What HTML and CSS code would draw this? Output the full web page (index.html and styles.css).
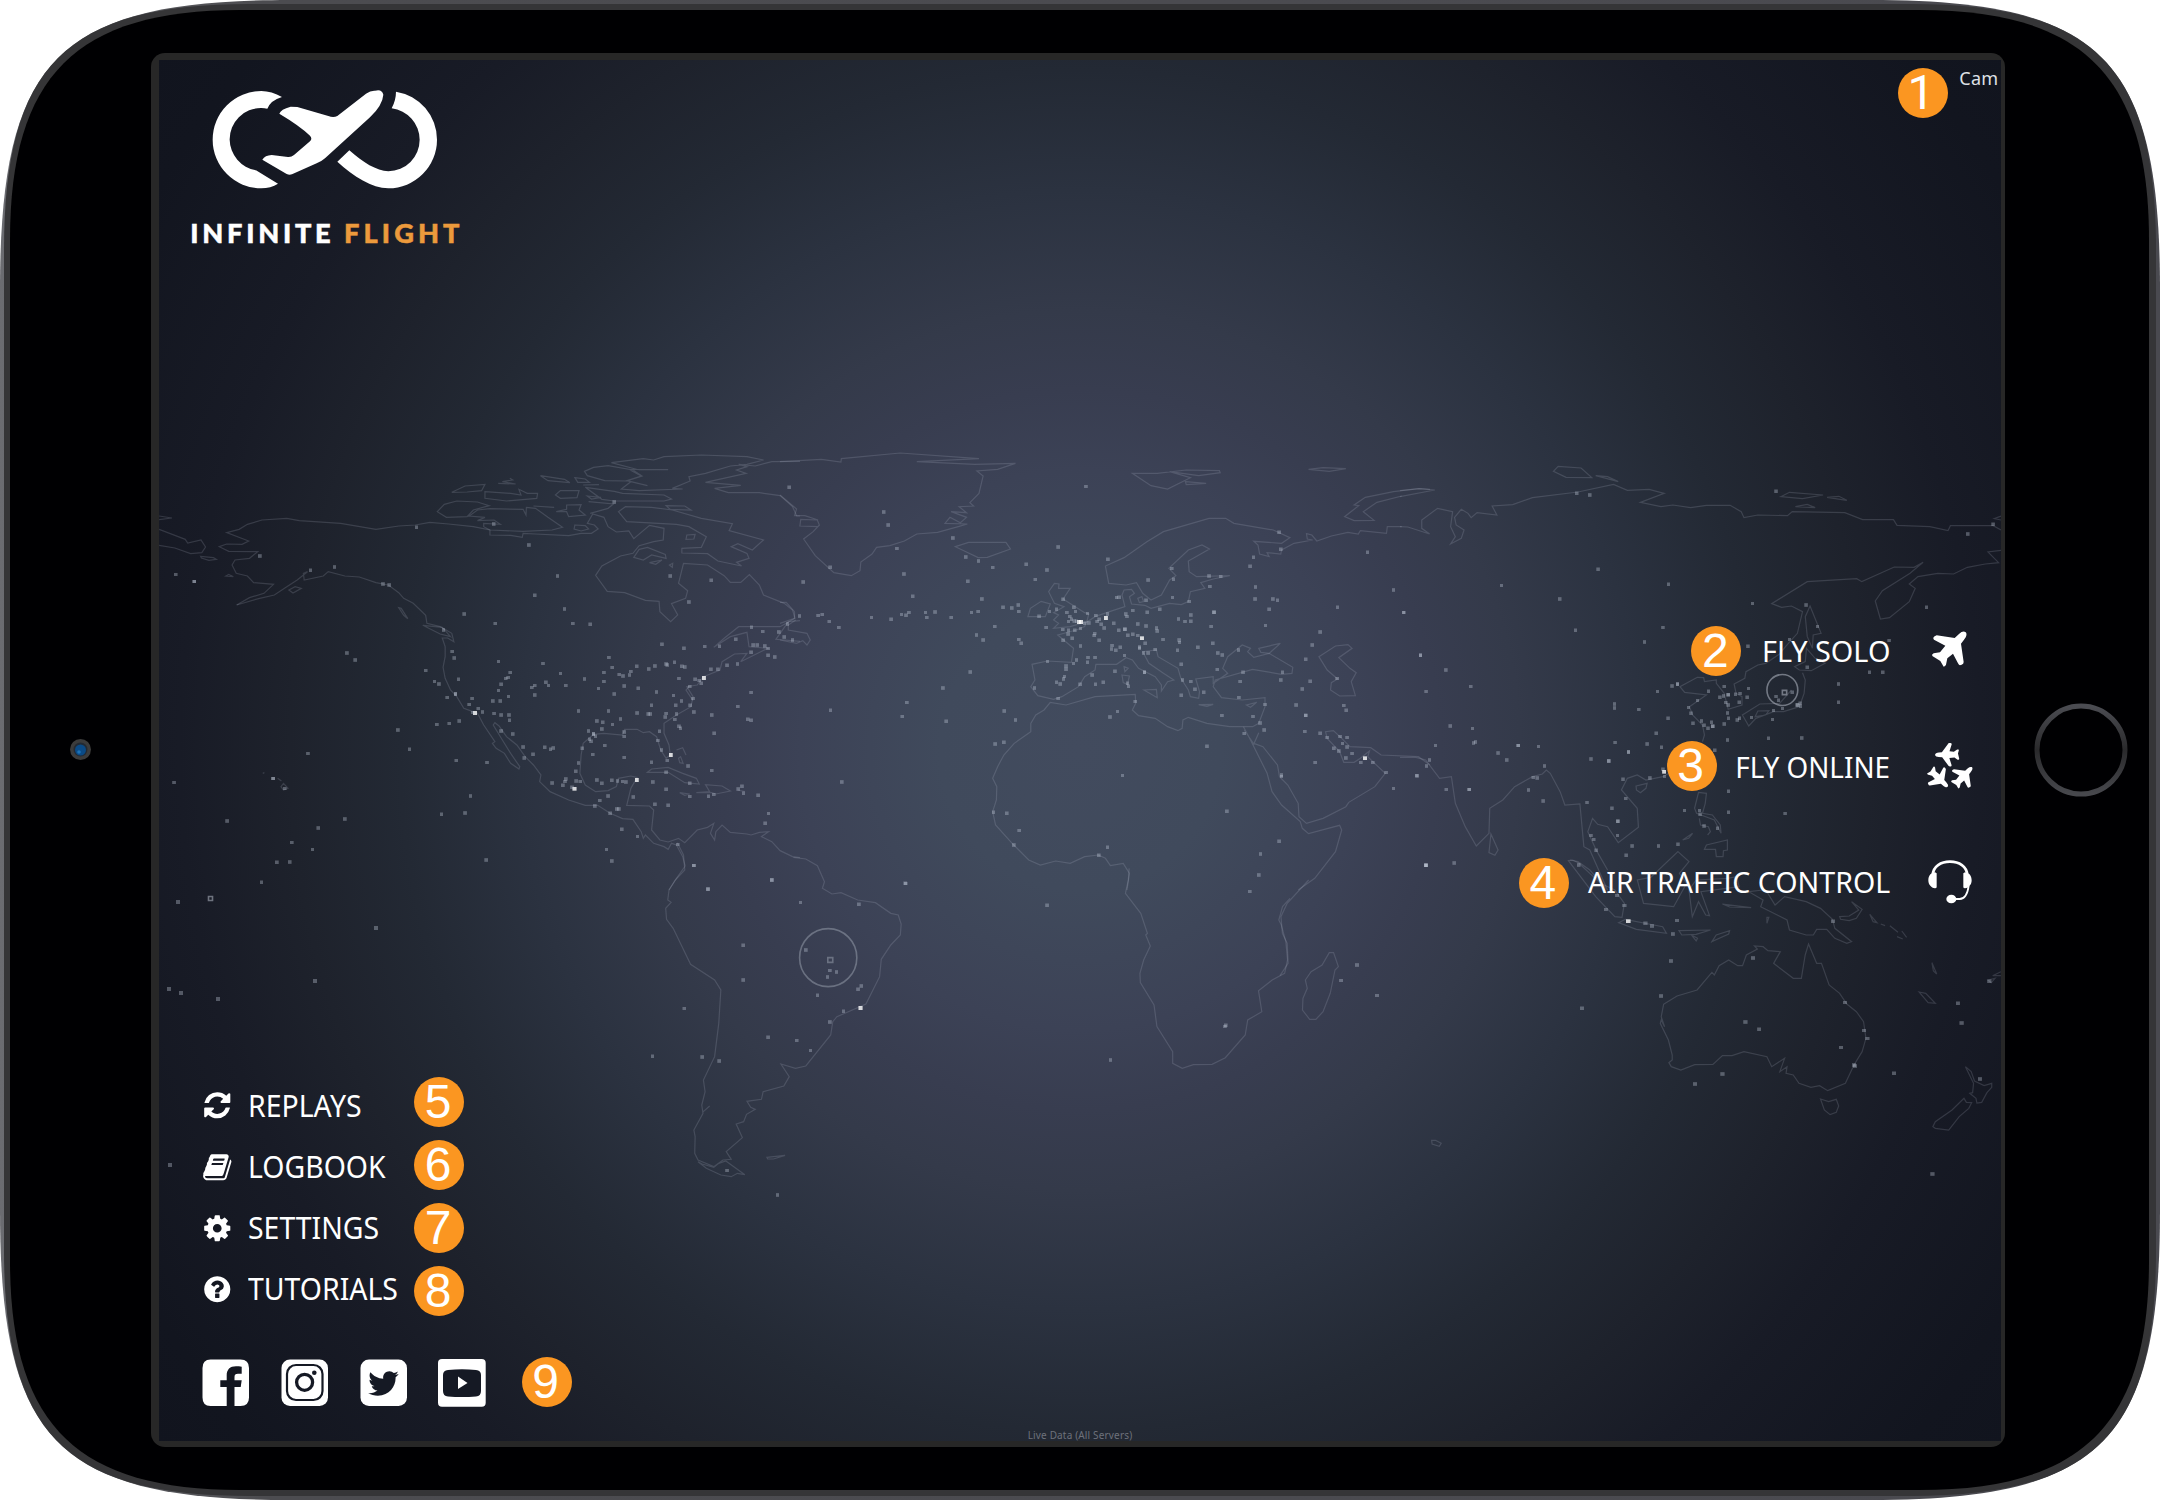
FILE: index.html
```
<!DOCTYPE html>
<html lang="en">
<head>
<meta charset="utf-8">
<title>Infinite Flight</title>
<link rel="stylesheet" href="styles.css">
</head>
<body>
<div class="device">
  <svg class="shell" viewBox="0 0 2160 1500">
    <defs>
      <linearGradient id="rim" x1="0" x2="1" y1="0" y2="0">
        <stop offset="0" stop-color="#6b6c71"/><stop offset=".12" stop-color="#4c4c50"/><stop offset="1" stop-color="#4a4a50"/>
      </linearGradient>
      <linearGradient id="ring" x1="0" x2="0" y1="0" y2="1">
        <stop offset="0" stop-color="#4b4c52"/><stop offset=".5" stop-color="#2a2a2c"/><stop offset="1" stop-color="#47484d"/>
      </linearGradient>
    </defs>
    <path fill="url(#rim)" d="M0 290C0 58 58 0 290 0H1870C2102 0 2160 58 2160 290V1210C2160 1442 2102 1500 1870 1500H290C58 1500 0 1442 0 1210Z"/>
    <path fill="#353537" d="M4 250C4 66 66 4 250 4H1910C2094 4 2156 66 2156 250V1250C2156 1434 2094 1496 1910 1496H250C66 1496 4 1434 4 1250Z"/>
    <path fill="#000002" d="M10 240C10 76 76 10 240 10H1919C2083 10 2149 76 2149 240V1260C2149 1424 2083 1490 1919 1490H240C76 1490 10 1424 10 1260Z"/>
    <circle cx="80.500" cy="749.500" r="10.500" fill="#3c3c3c"/>
    <circle cx="80.500" cy="749.500" r="7" fill="#232a33"/>
    <circle cx="80.500" cy="750" r="5.500" fill="#0a4a86"/>
    <circle cx="79" cy="752" r="1.800" fill="#1b72b8"/>
    <circle cx="2081" cy="750" r="44" fill="none" stroke="url(#ring)" stroke-width="5"/>
  </svg>

  <div class="bezel"><main class="screen">
    <svg class="map" viewBox="159 60 1842 1381">
      <defs>
        <marker id="dim" markerUnits="userSpaceOnUse" markerWidth="9" markerHeight="11" refX="4.500" refY="5.500"><rect width="9" height="11" fill="#c9d2e2" fill-opacity=".34"/></marker>
        <marker id="lit" markerUnits="userSpaceOnUse" markerWidth="10" markerHeight="12" refX="5" refY="6"><rect width="10" height="12" fill="#fff" fill-opacity=".8"/></marker>
        <marker id="pt" markerUnits="userSpaceOnUse" markerWidth="4" markerHeight="4" refX="2" refY="2"><rect width="4" height="4" fill="#c9d2e2" fill-opacity=".34"/></marker>
      </defs>

      <!-- North America and the eastern Pacific -->
      <g transform="translate(150 430) scale(.41454 .33333)">
        <path class="coast" d="M22 298L60 316 85 328 91 339 123 330 134 351 125 368 98 371 60 354 22 346M122 379L153 383 160 388 142 391 124 384ZM22 258L53 264 22 269"/>
        <path class="coast" d="M209 525L262 506 300 495 330 470 355 450 380 425 370 430 372 450 418 438 430 425 470 438 505 441 545 458 575 465 600 488 612 505 635 520 665 556 668 580 700 590 728 610 733 635 718 624 705 624 712 650 712 680 707 712 712 745 725 780 740 800 757 835 790 850 805 885 832 935 826 940 835 955 855 970 870 1000 890 1017 892 1010 870 970 850 930 828 885 832 878 842 888 860 920 885 945 905 980 925 1005 943 1035 940 1055 965 1085 1010 1110 1050 1126 1080 1126 1110 1150 1140 1166 1165 1168 1185 1205 1190 1225 1195 1215 1215 1240 1240 1250 1250 1258 1258 1240 1270 1245 1285 1280 1291 1308 1270 1345 1252 1380"/>
        <path class="coast" d="M209 525L240 503 275 490 298 463 250 458 235 438 208 430 198 405 205 390 240 385 260 365 190 364 167 350 185 342 222 343 238 333 185 308 215 298 235 283 270 270 330 265 360 272 460 280 545 298 600 288 640 285 675 277 720 282 780 290 820 300 820 315 870 316 898 322 900 310 930 312 1010 317 1040 310 1065 310 1081 297 1072 285 1055 280 1068 252 1095 262 1105 290 1125 306 1155 303 1167 326 1205 286 1240 295 1238 330 1215 335 1180 347 1165 370 1135 378 1090 408 1075 436 1103 484 1145 488 1195 511 1228 514 1230 545 1256 575 1273 555 1258 521 1292 505 1297 482 1275 460 1287 400 1345 405 1385 437 1400 457 1425 457 1446 434 1470 465 1480 495 1530 520 1550 540 1556 565 1520 590 1420 590 1385 625 1360 652 1400 620 1440 607 1445 650 1490 655 1425 695 1440 670 1410 672 1380 695 1375 720 1335 740 1320 765 1295 770 1310 800 1305 830 1270 855 1240 880 1240 910 1252 945 1255 975 1245 985 1232 960 1222 920 1205 905 1190 908 1175 898 1145 898 1140 915 1095 910 1070 913 1045 940 1040 975 1037 1030 1050 1065 1075 1085 1105 1082 1125 1070 1130 1045 1160 1038 1175 1042 1160 1075 1150 1126 1205 1128 1215 1140 1210 1200 1230 1230 1250 1236 1275 1225 1290 1238 1320 1200 1345 1192 1360 1180 1352 1210 1362 1230 1365 1205 1380 1185 1400 1207 1440 1212 1450 1215 1470 1207 1492 1205 1475 1220 1500 1235 1520 1262 1550 1280 1568 1283"/>
        <path class="coast" d="M693 245L710 223 740 213 790 216 818 227 780 240 765 260 715 262ZM728 187L760 168 808 163 800 182 765 186ZM808 185L870 190 895 195 890 178 910 190 935 190 933 205 860 213 808 205ZM840 160L882 162 850 155 875 150 868 145M790 240L820 236 900 238 907 255 908 232 930 235 960 262 995 292 970 300 900 304 820 300 805 290 805 280 845 283 830 270 790 272 808 262 770 258ZM925 228L975 232M942 137L1000 148 1013 158 960 152ZM1025 143L1050 147 1060 157 1032 157ZM978 195L990 182 1035 182 1030 203 990 205ZM1005 225L1040 224 1035 240 1050 255 1010 260 1005 245 980 245 1005 238ZM1025 285L1050 287 1058 297 1040 303 1023 297ZM1055 198L1088 202 1065 207ZM1045 165L1083 164M1058 215L1118 222 1105 235 1062 250M1050 172L1120 184 1140 190 1240 195 1258 207 1240 213 1120 213 1090 208 1050 172"/>
        <path class="coast" d="M1048 124L1070 112 1105 107 1165 120 1187 138 1150 153 1097 152 1055 137ZM1113 98L1190 86 1215 90 1240 80 1330 75 1440 80 1480 90 1440 103 1400 108 1340 130 1300 140 1303 153 1260 175 1285 177 1180 182 1137 177 1160 155 1200 167 1150 152 1185 138 1155 118 1250 119 1180 120 1113 98M1568 94L1500 95 1460 108 1420 103 1440 110 1415 120 1438 130 1340 157 1425 166 1362 175 1395 188 1470 188 1520 197 1550 230 1560 258 1568 258"/>
        <path class="coast" d="M1130 245L1147 230 1210 232 1260 240 1330 265 1405 281 1397 302 1480 330 1453 360 1418 341 1402 350 1440 370 1445 385 1415 397 1427 408 1370 393 1345 371 1283 369 1283 355 1330 352 1342 320 1300 290 1270 283 1150 275ZM1245 227L1290 228 1305 240 1255 238ZM1295 315L1315 313 1312 327 1293 328ZM1180 358L1200 352 1243 373 1245 385 1210 375 1190 390 1167 382ZM1205 398L1235 390 1220 403ZM1253 405L1261 400 1260 412ZM335 480L350 470 365 475 345 489ZM183 438L190 433 201 440ZM600 533L606 535 622 566 612 556ZM658 586L705 592 725 620 700 612ZM1568 572L1540 575 1510 628 1568 634M1200 1027L1210 1017 1250 1012 1285 1030 1318 1045 1325 1062 1290 1058 1250 1027ZM1318 1088L1350 1085 1340 1064 1380 1068 1400 1083 1365 1092 1355 1088ZM1278 1088L1302 1092 1290 1096ZM1418 1080L1435 1085M1270 960L1285 953 1293 975M1275 985L1280 980 1286 1000 1278 998ZM316 1070L322 1060 333 1075 322 1080ZM308 1045L317 1053M272 1030L276 1028M1300 770L1293 780 1310 812"/>
        <polyline class="traffic" points="62,434 107,455 265,378 387,421 445,411 562,462 577,465 643,292 829,282 914,345 1120,216 983,438 928,496 1000,537 1020,581 1062,583 758,552 833,581 708,600 475,669 495,690 729,665 734,684 665,722 686,755 697,762 744,748 717,803 737,792 777,806 770,824 841,695 869,728 864,743 858,746 847,763 841,782 827,813 845,813 865,800 792,836 802,846 830,851 847,855 866,855 867,871 692,884 722,881 746,873 598,900 626,958 847,903 875,912 900,951 903,984 924,973 952,952 966,958 973,954 739,992 813,998 948,701 990,731 955,757 961,767 1003,767 921,773 928,767 928,795 1048,747 1107,683 1115,713 1095,728 1095,755 1082,776 1132,734 1141,738 1157,735 1160,725 1174,709 1203,717 1218,708 1245,702 1248,705 1265,697 1283,709 1290,711 1144,768 1178,775 1120,792 1034,843 1106,843 1135,867 1175,849 1202,852 1207,852 1210,826 1222,786 1263,797 1282,813 1268,826 1245,851 1270,852 1243,861 1266,869 1303,826 1310,806 1312,846 1355,855 1302,770 1276,746 1315,748 1325,752 1330,760 1353,718 1370,718 1392,706 1417,702 1235,643 1288,655 1338,650 1374,649 1413,628 1451,592 1478,605 1517,606 1538,582 1530,621 1550,630 1455,645 1465,645 1483,648 1491,656 1450,667 1491,676 1507,681 1450,788 1418,830 1361,910 1442,868 1450,871 1078,873 1092,877 1090,897 1116,884 1058,903 1070,912 1075,919 1060,928 1064,934 1144,906 1144,920 1097,947 1068,974 1144,983 1229,904 1225,932 1276,889 1280,895 1234,960 1248,992 1210,997 1298,1008 1355,1022 1043,955 1034,999 1027,1024 1028,1053 1038,1055 1003,1047 1001,1055 996,1066 970,1059 1078,1050 1090,1060 1114,1051 1128,1053 1140,1055 1148,1056 1213,1056 1245,1027 1245,1078 1302,1060 1302,1100 1347,1099 1360,1094 1419,1077 1428,1069 1432,1090 1467,1096 1166,1101 1105,1098 1085,1112 1073,1128 1126,1137 1131,1137 1110,1150 1218,1123 1250,1126 1492,1151 1484,1180 1138,1198 1176,1220 1273,1244 1101,1259 1114,1293 1312,1307 1500,1350 1255,438 1354,451 1300,516 1542,172 773,1098 760,1149 703,1153 811,1290 381,971 58,1058 297,1046 325,1076 186,1173 470,1167 406,1194 342,1238 392,1259 306,1297 337,1296 269,1357 1346,1377"/>
        <polyline class="hubs" points="784,849 1024,1076 1174,1050 1336,744 1256,975"/>
        <polyline class="traffic" points="778,848 1018,1072 1070,912 737,792 107,455 297,1046"/>
      </g>

      <!-- Greenland, Europe and northern Africa -->
      <g transform="translate(780 430) scale(.41454 .33333)">
        <path class="coast" d="M0 95L100 88 147 96 148 86 290 69 480 86 330 95 470 103 568 100 525 118 475 123 490 138 480 190 458 218 467 228 432 230 450 248 413 245 450 262 435 278 410 262 398 280 452 282 430 290 380 307 330 312 300 333 265 347 233 352 222 372 195 396 193 422 172 437 130 428 85 377 57 327 80 305 95 285 90 270 50 268 48 288 92 290M92 270L60 257 35 257 40 237 0 195M423 350L455 337 545 337 556 357 500 382 478 383ZM850 130L910 130 980 120 1060 122 1062 128 1010 137 940 125 990 143 935 177 895 167ZM978 155L1028 160 980 164ZM1275 118L1310 113 1365 116 1325 124Z"/>
        <path class="coast" d="M1568 178L1540 176 1480 185 1412 202 1385 225 1396 227 1362 260 1385 272 1433 271 1407 245 1440 217 1500 198M1500 290L1465 290 1463 310 1400 302 1395 312 1370 307 1330 318 1295 333 1283 315 1270 311 1272 327 1285 330 1240 340 1210 360 1208 372 1175 368 1180 380 1157 372 1153 345 1143 334 1210 340 1230 323 1190 300 1095 280 1075 265 1035 265 925 305 885 335 830 383 785 408 793 460 835 465 860 458 875 490 895 510 920 495 940 450 955 437 938 415 985 360 1018 345 1036 357 985 393 987 425 1005 440 1085 437 1045 447 1015 458 1025 475 990 485 985 515 968 524 940 520 895 535 880 526 848 522 843 500 855 490 848 478 830 480 825 495 832 530 795 545 760 560 738 578 735 590 715 600 670 615 708 655 703 697 645 693 608 703 615 750 605 770 622 797 660 808 680 800 720 770 735 740 760 720 762 703 812 703 835 683 850 690 865 715 905 740 920 765 920 783 935 755 950 750 925 730 890 700 875 665 908 660 912 680 960 715 967 745 985 780 990 800 1010 805 1012 785 1003 747 1045 740 1045 760 1080 730 1068 715 1080 680 1115 645 1135 655 1128 665 1143 682 1180 670 1237 712 1235 730 1210 733 1140 718 1050 750 1045 770 1065 803 1115 810 1170 803 1170 830 1155 880 1140 890 1085 890 1030 880 985 862 972 870 970 895 960 902 935 890 905 865 865 857 850 840 858 820 857 793 760 800 690 825 652 817 637 840 617 855 605 880 605 905 565 940 540 975 525 1010 513 1045 523 1070 522 1110 513 1145 520 1185 560 1240 600 1290 628 1305 665 1293 700 1300 735 1280 768 1275 785 1285 797 1307 828 1300 843 1330 837 1380"/>
        <path class="coast" d="M1118 890L1135 930 1175 1030 1187 1085 1210 1125 1255 1175 1260 1195 1275 1211 1350 1186 1355 1200 1340 1265 1290 1345 1250 1380M1155 908L1143 942 1120 900M1143 940L1165 950 1200 1005 1205 1040 1225 1065 1250 1120 1252 1160 1270 1180 1310 1165 1365 1130 1372 1117 1435 1070 1460 1030 1430 995 1418 980 1422 963 1400 985 1385 997 1360 997 1350 965 1320 925 1316 905 1335 902 1355 925 1375 950 1425 953 1450 975 1540 980 1568 1005"/>
        <path class="coast" d="M648 485L662 460 673 462 672 475 700 475 683 507 735 548 745 552 740 575 700 590 660 595 672 580 660 570 672 555 660 548 685 530 662 520ZM598 560L604 535 630 514 652 522 640 560ZM863 505L873 500 877 515 867 518ZM830 710L840 715 832 725ZM825 735L843 738 838 763 828 758ZM878 780L908 778 910 803ZM1155 655L1207 640 1180 670 1160 667ZM1300 680L1340 648 1370 644 1380 655 1348 683 1375 715 1390 728 1378 755 1388 797 1350 798 1328 780 1330 758 1345 747 1320 720ZM1010 824L1045 823 1030 829ZM1125 825L1150 817 1135 832ZM0 517L15 517 35 545 35 565 0 580M0 630L40 640 55 632 65 645 73 630 65 610 20 600 20 585 38 570"/>
        <polyline class="traffic" points="250,246 261,285 417,324 282,356 738,170 671,351 448,381 479,393 513,413 594,403 644,420 616,449 453,454 299,432 56,456 121,412 320,499 487,507 791,388 945,416 888,450 949,448 1035,438 1063,440 1037,470 1142,382 1134,409 1204,307 1208,358 1417,367 1480,480 1345,532 1504,548 1147,471 1146,507 1189,507 1200,511 1180,538 1047,547 47,558 92,557 102,554 119,575 142,593 221,563 268,568 293,554 304,556 311,548 351,548 354,563 374,546 413,563 462,548 478,545 538,532 559,534 575,525 576,545 518,590 474,615 490,630 576,629 582,640 642,593 625,559 650,545 667,538 683,508 692,548 709,532 713,545 742,551 699,560 703,568 710,573 735,580 745,579 682,599 696,601 695,612 711,601 725,596 705,625 683,631 762,557 770,568 765,575 775,583 782,594 790,552 805,580 812,503 818,502 834,552 837,560 851,542 886,547 916,538 883,511 947,503 987,515 991,555 991,574 977,575 961,567 883,588 863,582 908,594 910,603 817,601 839,616 851,613 863,617 881,640 867,651 867,655 924,629 963,630 964,638 959,661 1008,652 1044,640 1040,590 1171,587 1303,606 1284,645 1268,688 1056,669 1067,675 1106,660 1055,719 1117,727 1212,727 1208,750 1279,754 1110,755 971,750 991,755 1001,778 1022,787 968,703 968,796 905,659 877,669 888,669 770,631 759,611 725,648 801,647 800,657 810,661 821,652 831,677 715,690 708,701 645,695 690,708 690,718 743,683 760,683 742,697 686,740 684,747 667,757 676,762 724,763 761,763 780,757 808,724 838,760 841,769 614,774 671,806 459,726 393,774 306,818 122,841 295,860 401,874 541,843 568,870 814,845 796,861 857,815 540,937 519,942 149,1056 826,1037 1030,949 1078,1144 1204,1234 1159,1272 1155,1335 790,1252 769,1276 302,1360 515,1147 547,1150 577,1202 564,1245 1066,857 1141,860 1107,803 1170,824 1158,879 1168,900 1120,911 1245,825 1268,857 1260,777 1266,905 1303,910 1320,923 1351,920 1368,923 1357,941 1368,951 1336,955 1348,963 1380,971 1365,984 1401,998 1430,998 1291,998 1462,1028 1480,1076 1536,1037 1344,746 1360,827 1366,841 1545,676 1210,1035 1210,1040 1558,1306"/>
        <polyline class="hubs" points="721,576 726,576 786,564 873,625 1411,985"/>
        <polyline class="traffic" points="715,574 696,575 758,617 753,735 879,727 879,727 832,598 832,598 1268,856 1558,1306 1047,547"/>
      </g>

      <!-- Asia -->
      <g transform="translate(1400 430) scale(.3954 .33333)">
        <path class="coast" d="M75 312L55 295 55 270 95 235 133 245 128 290 140 320 128 342 155 325 162 300 142 285 138 262 155 238 172 250 180 263 195 248 245 255 233 228 285 224 335 203 450 186 540 163 575 181 630 178 668 190 608 217 660 230 690 225 735 233 775 226 835 226 863 245 870 263 905 255 980 257 992 245 1125 248 1170 269 1248 269 1257 286 1340 290 1386 302 1392 287 1500 287 1520 300M1520 361L1487 366 1514 398 1480 402 1435 412 1400 432 1360 430 1310 440 1288 462 1303 475 1288 515 1238 563 1215 567 1202 513 1220 482 1290 430 1323 397 1300 412 1250 411 1168 455 1155 446 1030 455 940 521 965 532 990 528 1018 545 1005 610 975 650 960 672 925 700 905 705 875 725 872 745 845 762 850 790 865 800 865 825 830 838 820 790 800 760 800 750 770 755 768 743 752 742 708 770 720 787 775 795 732 830 740 855 765 885 770 915 765 935M388 124L400 109 458 114 485 143 420 142ZM495 137L525 140 552 155ZM963 200L985 187 1070 195 1018 206ZM1080 202L1110 199 1130 211ZM1000 230L1030 223 1050 233ZM1520 258L1503 266 1520 270M0 182L50 176 88 180 0 200M0 290L20 291 75 312"/>
        <path class="coast" d="M0 982L40 982 65 990 100 1045 130 1040 140 1120 165 1190 193 1248 225 1210 227 1135 260 1110 290 1070 335 1040 360 1032 370 1020 380 1030 405 1085 417 1125 455 1122 465 1250 480 1260 510 1340 525 1380M230 1212L248 1260 240 1276 225 1268ZM525 1320L497 1262 475 1205 487 1165 500 1183 525 1190 552 1238 603 1192 600 1135 560 1080 575 1045 600 1035 622 1050 665 1040 680 1030M597 1068L625 1060 622 1075 608 1088 598 1080ZM755 1087L775 1090 772 1120 765 1150 790 1155 810 1185 812 1210 795 1170 750 1150 745 1135ZM757 1165L760 1185 780 1190 785 1205 778 1215M770 1258L775 1245 828 1230 828 1260 818 1262 817 1280 800 1280 798 1258ZM715 1230L740 1210 730 1225ZM430 1290L450 1295 480 1320 525 1380M1037 528L1065 610 1045 615 1043 655 1030 620 1025 560ZM1028 655L1050 685 1075 700 1040 722 1010 720 998 710 1025 695ZM1018 728L1025 750 1022 790 1010 830 970 845 945 845 900 865 882 888 866 855 910 822 960 820 990 780M898 860L905 843 933 842 925 855Z"/>
        <polyline class="traffic" points="447,190 480,195 951,184 1436,312 1500,283 501,418 257,467 404,507 444,601 679,463 665,593 618,636 892,521 1027,525 1056,590 985,629 880,649 1237,632 1332,532 1187,727 1221,727 1109,762 1109,817 1030,712 52,676 116,720 179,770 66,785 10,548 127,888 183,896 186,939 191,936 90,947 299,947 350,950 248,969 270,990 75,990 67,1008 43,1038 117,1079 175,1079 325,1080 362,1113 365,1008 337,1043 347,1044 543,822 543,834 604,839 651,785 688,768 702,763 678,865 648,910 625,942 544,938 578,966 528,993 483,987 661,952 736,850 730,833 752,812 741,880 763,873 769,886 779,895 788,877 791,889 820,770 780,784 809,802 818,798 830,795 849,793 860,791 824,818 830,825 858,817 878,802 881,776 828,849 831,865 820,882 853,870 859,865 889,863 945,842 967,836 942,869 951,800 957,811 992,787 1004,825 1012,820 1013,829 932,925 1016,924 828,930 796,961 831,1084 831,1147 720,1142 757,1142 759,1153 769,1188 803,1195 974,1151 632,1044 564,1048 571,1106 473,1118 536,1135 551,1174 483,1217 490,1229 496,1261 550,1217 587,1248 654,1248 703,1243 572,1276 452,1305 137,1299 66,1306 665,1018 669,1040"/>
        <polyline class="hubs" points="668,1025"/>
        <polyline class="traffic" points="830,794 702,762 791,889 1006,825 299,947 578,966 551,1174 66,1306 175,1079 528,993"/>
        <ellipse class="range" cx="967" cy="780" rx="39" ry="46.500"/>
        <rect class="range" x="967" y="781" width="11" height="13"/>
      </g>

      <!-- South America and southern Africa -->
      <g transform="translate(640 800) scale(.41454 .33333)">
        <path class="coast" d="M90 128L105 165 108 210 85 240 70 270 67 300 75 307 62 325 64 358 80 385 122 493 180 540 195 570 190 670 180 770 153 840 157 875 149 915 152 940 130 990 133 1010 132 1060 140 1080 178 1100 200 1080 220 1078 208 1055 247 1013 232 972 250 965 257 943 278 928 267 922 258 904 293 898 297 875 347 858 360 830 340 792 375 805 400 798 460 705 465 665 475 650 545 612 578 530 582 478 605 435 628 405 630 372 623 345 605 340 568 308 525 300 485 278 463 282 440 265 445 245 428 197 400 177 370 172M168 918L150 938M140 1085L160 1105 195 1125 220 1130 235 1120 253 1124 207 1083 190 1090 178 1102 150 1092ZM306 1072L350 1066 322 1077 308 1077ZM1180 205L1178 240 1171 280 1208 340 1224 400 1220 405 1231 438 1215 480 1206 520 1207 548 1240 615 1247 680 1285 755 1285 790 1308 805 1335 794 1380 793 1412 773 1460 705 1466 660 1500 635 1492 572 1525 540 1555 520 1562 480 1558 425 1547 375 1541 360 1550 320 1568 295"/>
        <polyline class="traffic" points="130,197 318,240 164,268 387,308 528,313 641,251 982,316 249,436 249,540 400,450 458,512 474,516 452,531 428,586 534,558 526,568 458,666 491,634 107,626 309,712 378,722 411,752 150,771 191,783 30,769 210,1112 332,1185 1135,780 1413,676 1411,680 1471,275"/>
        <polyline class="hubs" points="532,624"/>
        <ellipse class="range faint" cx="454" cy="473" rx="69" ry="87"/>
        <rect class="range faint" x="453" y="473" width="12" height="14"/>
      </g>

      <!-- Indian Ocean, Indonesia, Australia and New Zealand -->
      <g transform="translate(1280 800) scale(.47832 .33333)">
        <path class="coast" d="M60 240L15 310 2 350 5 400 15 430 17 490 0 527M103 458L112 458 122 500 115 510 105 580 90 635 75 658 62 658 47 630 48 595 57 565 53 540 65 515 88 495ZM317 1021L325 1021 337 1030 333 1039 318 1032ZM603 182L612 180 625 190 670 250 700 270 720 310 715 352 700 350 660 290ZM708 368L722 358 800 380 808 400 745 388ZM834 392L900 390 870 403 840 405ZM860 405L873 415 870 423ZM903 425L912 405 940 392 938 402ZM832 155L855 185 835 220 850 250 823 320 760 310 747 240 775 232ZM862 350L855 270 870 240 935 235 955 230 960 260 880 275 898 347 890 345 875 305ZM925 312L985 323 940 321ZM1018 352L1022 352 1018 370ZM980 275L1010 270 1020 280 1035 315 1055 290 1100 305 1130 325 1155 358 1160 385 1195 425 1185 430 1160 415 1143 388 1122 388 1115 405 1100 405 1065 390 1060 360 1005 320 1010 300ZM1170 350L1190 348 1210 330 1195 305 1217 328 1205 355 1190 362 1172 358ZM1233 343L1248 368 1240 365ZM1256 372L1265 377M1275 377L1292 397M1300 393L1310 412M1290 410L1302 417M1363 488L1373 522 1366 513ZM1336 576L1350 580 1370 610 1355 608ZM1507 515L1490 527 1507 527M1480 540L1495 535 1487 548Z"/>
        <path class="coast" d="M802 613L830 588 872 570 903 517 908 525 918 497 938 480 957 497 967 497 975 465 998 447 992 438 1010 440 1020 452 1046 455 1032 490 1073 535 1090 535 1098 465 1105 432 1122 490 1132 490 1148 555 1170 580 1185 612 1205 635 1220 665 1225 715 1217 755 1200 795 1182 850 1145 872 1128 857 1110 862 1085 850 1073 825 1058 820 1060 800 1045 815 1055 775 1028 800 1018 770 970 755 945 767 925 767 905 793 867 794 838 810 818 800 813 788 820 780 820 765 812 720 795 670 797 660 804 680 797 650ZM1130 897L1147 905 1163 898 1168 918 1163 937 1150 944 1138 930ZM1433 800L1445 815 1452 843 1472 857 1488 850 1488 862 1478 878 1467 907 1457 909 1455 895 1442 880 1448 878 1450 850ZM1430 895L1435 907 1446 908 1440 925 1420 950 1398 990 1370 985 1365 980 1370 965 1405 930Z"/>
        <polyline class="traffic" points="161,495 128,542 203,587 631,625 797,588 817,483 821,402 830,362 764,370 778,378 681,329 720,317 705,287 989,474 973,666 1002,688 1181,608 1221,692 1228,716 1173,743 1200,795 1202,798 1284,820 925,822 868,852 1417,610 1425,669 1483,544 1463,837 1364,1122 1156,364"/>
        <polyline class="hubs" points="728,364"/>
      </g>

      <!-- South Pacific -->
      <polyline class="pacific" points="178,902 376,928 315,981 169,989 181,993 218,999 170,1165"/>
      <rect class="range" x="208.500" y="896.500" width="4" height="4"/>
    </svg>

    <header class="top">
      <svg class="logo" viewBox="0 0 280 170">
        <g transform="translate(-185 -80) scale(.33333)" fill="#fff">
          <path d="M846 291C826 279 804 273 784 273A146 146 0 0 0 638 419 146 146 0 0 0 784 565C802 565 820 560 834 551L768 511A95 95 0 0 1 689 419 94 94 0 0 1 784 324Q794 324 802 326 812 301 846 291Z"/>
          <path d="M1188 275A146 146 0 0 1 1311 419 146 146 0 0 1 1165 565C1115 564 1062 530 1012 485L1048 451C1088 487 1130 513 1165 514A95 95 0 0 0 1259 419 95 95 0 0 0 1175 325Q1188 300 1188 275Z"/>
          <path d="M838 341Q842 328 872 320L892 321 985 348Q1000 354 1012 348L1098 281Q1112 271 1125 272 1146 266 1150 284 1148 315 1110 352L975 475Q965 484 950 490L876 523Q868 526 860 522L787 479Q795 466 815 465L864 471Q874 472 882 465L930 424Q938 416 930 407 900 378 838 341Z"/>
        </g>
        <text class="brand" x="5.200" y="163" textLength="140.500" lengthAdjust="spacing">INFINITE</text>
        <text class="brand accent" x="159" y="163" textLength="115.500" lengthAdjust="spacing">FLIGHT</text>
      </svg>
      <span class="user">Cam</span>
    </header>

    <nav class="modes">
      <a class="mode solo"><span>FLY SOLO</span>
        <svg viewBox="50 25 140 140"><g id="plane"><path d="M165 40C171 44 169 54 161 63L152 75 160 130Q160 136 154 138L149 140Q146 140 143 134L128 105 111 119 107 138Q105 143 100 144L90 127 66 112Q63 107 70 104L89 101 105 81 71 63Q66 58 73 53L79 50 133 58 146 46Q157 36 165 40Z"/></g></svg></a>
      <a class="mode online"><span>FLY ONLINE</span>
        <svg viewBox="50 365 140 140">
          <g transform="translate(115 401) rotate(-135) scale(.6) translate(-118 -89)"><use href="#plane"/></g>
          <g transform="translate(82 466) rotate(90) scale(.6) translate(-116 -91)"><use href="#plane"/></g>
          <g transform="translate(154 469) scale(.62) translate(-116 -91)"><use href="#plane"/></g>
        </svg></a>
      <a class="mode atc"><span>AIR TRAFFIC CONTROL</span>
        <svg viewBox="50 713 140 140">
          <path fill="none" stroke="#fff" stroke-width="8" d="M67 765C68 738 92 724 119 724S170 738 171 765"/>
          <path d="M79 759V800Q79 804 74 804C62 803 54 792 54 780 54 766 62 757 74 756ZM159 759V800Q159 804 164 804C176 803 184 792 184 780 184 766 176 757 164 756Z"/>
          <path fill="none" stroke="#fff" stroke-width="5.500" d="M175 796C172 820 162 836 148 836H125"/>
          <ellipse cx="123" cy="836" rx="15" ry="13"/>
        </svg></a>
    </nav>

    <nav class="menu">
      <a><svg viewBox="0 0 1792 1792"><path d="M1639 1056q0 5-1 7-64 268-268 434.500t-478 166.500q-146 0-282.500-55t-243.500-157l-129 129q-19 19-45 19t-45-19-19-45v-448q0-26 19-45t45-19h448q26 0 45 19t19 45-19 45l-137 137q71 66 161 102t187 36q134 0 250-65t186-179q11-17 53-117 8-23 30-23h192q13 0 22.500 9.500t9.500 22.500zm25-800v448q0 26-19 45t-45 19h-448q-26 0-45-19t-19-45 19-45l138-138q-148-137-349-137-134 0-250 65t-186 179q-11 17-53 117-8 23-30 23h-199q-13 0-22.500-9.500t-9.500-22.500v-7q65-268 270-434.500t480-166.500q146 0 284 55.500t245 156.500l130-129q19-19 45-19t45 19 19 45z"/></svg><span>REPLAYS</span></a>
      <a><svg viewBox="0 0 1792 1792"><path d="M1703 478q40 57 18 129l-275 906q-19 64-76.500 107.500t-122.500 43.500h-923q-77 0-148.500-53.500t-99.500-131.500q-24-67-2-127 0-4 3-27t4-37q1-8-3-21.500t-3-19.500q2-11 8-21t16.500-23.500 16.500-23.500q23-38 45-91.500t30-91.500q3-10 .5-30t-.5-28q3-11 17-28t17-23q21-36 42-92t25-90q1-9-2.500-32t.5-28q4-13 22-30.500t22-22.500q19-26 42.500-84.500t27.500-96.500q1-8-3-25.500t-2-26.500q2-8 9-18t18-23 17-21q8-12 16.500-30.500t15-35 16-36 19.500-32 26.500-23.500 36-11.500 47.500 5.500l-1 3q38-9 51-9h761q74 0 114 56t18 130l-274 906q-36 119-71.500 153.500t-128.500 34.500h-869q-27 0-38 15-11 16-1 43 24 70 144 70h923q29 0 56-15.500t35-41.500l300-987q7-22 5-57 38 15 59 43zm-1064 2q-4 13 2 22.500t20 9.500h608q13 0 25.500-9.500t16.500-22.500l21-64q4-13-2-22.500t-20-9.500h-608q-13 0-25.500 9.500t-16.500 22.500zm-83 256q-4 13 2 22.500t20 9.500h608q13 0 25.500-9.500t16.500-22.500l21-64q4-13-2-22.500t-20-9.500h-608q-13 0-25.500 9.500t-16.500 22.500z"/></svg><span>LOGBOOK</span></a>
      <a><svg viewBox="0 0 1792 1792"><path d="M1152 896q0-106-75-181t-181-75-181 75-75 181 75 181 181 75 181-75 75-181zm512-109v222q0 12-8 23t-20 13l-185 28q-19 54-39 91 35 50 107 138 10 12 10 25t-9 23q-27 37-99 108t-94 71q-12 0-26-9l-138-108q-44 23-91 38-16 136-29 186-7 28-36 28h-222q-14 0-24.500-8.500t-11.500-21.500l-28-184q-49-16-90-37l-141 107q-10 9-25 9-14 0-25-11-126-114-165-168-7-10-7-23 0-12 8-23 15-21 51-66.500t54-70.500q-27-50-41-99l-183-27q-13-2-21-12.500t-8-23.500v-222q0-12 8-23t19-13l186-28q14-46 39-92-40-57-107-138-10-12-10-24 0-10 9-23 26-36 98.500-107.500t94.500-71.500q13 0 26 10l138 107q44-23 91-38 16-136 29-186 7-28 36-28h222q14 0 24.500 8.500t11.500 21.500l28 184q49 16 90 37l142-107q9-9 24-9 13 0 25 10 129 119 165 170 7 8 7 22 0 12-8 23-15 21-51 66.500t-54 70.500q26 50 41 98l183 28q13 2 21 12.500t8 23.500z"/></svg><span>SETTINGS</span></a>
      <a><svg viewBox="0 0 1792 1792"><path d="M1024 1376v-192q0-14-9-23t-23-9h-192q-14 0-23 9t-9 23v192q0 14 9 23t23 9h192q14 0 23-9t9-23zm256-672q0-88-55.500-163t-138.500-116-170-41q-243 0-371 213-15 24 8 42l132 100q7 6 19 6 16 0 25-12 53-68 86-92 34-24 86-24 48 0 85.500 26t37.500 59q0 38-20 61t-68 45q-63 28-115.500 86.500t-52.500 125.500v36q0 14 9 23t23 9h192q14 0 23-9t9-23q0-19 21.500-49.500t54.500-49.500q32-18 49-28.500t46-35 44.500-48 28-60.500 12.500-81zm384 192q0 209-103 385.500t-279.500 279.500-385.500 103-385.500-103-279.500-279.500-103-385.500 103-385.500 279.500-279.500 385.500-103 385.500 103 279.500 279.500 103 385.500z"/></svg><span>TUTORIALS</span></a>
    </nav>

    <div class="social">
      <svg viewBox="0 0 48 48"><path fill-rule="evenodd" d="M8.500.500H38.500Q47 .500 47 9V38.500Q47 47 38.500 47H32.500V28H38.700L39.700 21.300H32.500V18C32.500 15.800 33.500 14.800 36 14.800H39.700V7.800C38 7.400 36 7.300 34 7.300 28 7.300 24.700 10.500 24.700 16.500V21.300H18.300V28H24.700V47H8.500Q.500 47 .500 38.500V9Q.500.500 8.500.500Z"/></svg>
      <svg viewBox="0 0 48 48"><rect x=".5" y=".5" width="46.500" height="46.500" rx="8.500"/><rect x="6" y="6" width="35.500" height="35" rx="9" fill="none" stroke="#151924" stroke-width="2.200"/><circle cx="23.600" cy="23.300" r="8" fill="none" stroke="#151924" stroke-width="3.300"/><circle cx="33.300" cy="13.700" r="2.300" fill="#151924"/></svg>
      <svg viewBox="0 0 48 48"><rect x=".5" y=".5" width="46.500" height="46.500" rx="8.500"/><path fill="#151924" transform="translate(8.300 9.300) scale(.0594)" d="M459.370 151.716c.325 4.548.325 9.097.325 13.645 0 138.720-105.583 298.558-298.558 298.558-59.452 0-114.680-17.219-161.137-47.106 8.447.974 16.568 1.299 25.340 1.299 49.055 0 94.213-16.568 130.274-44.832-46.132-.975-84.792-31.188-98.112-72.772 6.498.974 12.995 1.624 19.818 1.624 9.421 0 18.843-1.300 27.614-3.573-48.081-9.747-84.143-51.980-84.143-102.985v-1.299c13.969 7.797 30.214 12.670 47.431 13.319-28.264-18.843-46.781-51.005-46.781-87.391 0-19.492 5.197-37.360 14.294-52.954 51.655 63.675 129.300 105.258 216.365 109.807-1.624-7.797-2.599-15.918-2.599-24.040 0-57.828 46.782-104.934 104.934-104.934 30.213 0 57.502 12.670 76.670 33.137 23.715-4.548 46.456-13.320 66.599-25.340-7.798 24.366-24.366 44.833-46.132 57.827 21.117-2.273 41.584-8.122 60.426-16.243-14.292 20.791-32.161 39.308-52.628 54.253z"/></svg>
      <svg viewBox="0 0 48 48"><rect x="0" y="0" width="47.700" height="47.700" rx="4"/><path fill="#151924" d="M10 11Q24 9.500 38 11 43 11.500 43 16V32Q43 37 38 37.500 24 38.700 10 37.500 5 37 5 32V16Q5 11.500 10 11Z"/><path d="M20 17.500L29.500 24 20 30Z"/></svg>
    </div>

    <footer class="status">Live Data (All Servers)</footer>
  </main></div>

  <b class="badge n1">1</b><b class="badge n2">2</b><b class="badge n3">3</b>
  <b class="badge n4">4</b><b class="badge n5">5</b><b class="badge n6">6</b>
  <b class="badge n7">7</b><b class="badge n8">8</b><b class="badge n9">9</b>
</div>
</body>
</html>
```
FILE: styles.css
```
* { box-sizing: border-box; }
body { margin: 0; background: #fff; overflow: hidden; }

.device { position: relative; width: 2160px; height: 1500px; padding: 53px 155px 53px 151px; }
.shell { position: absolute; inset: 0; width: 2160px; height: 1500px; }

.bezel {
  position: relative; width: 1854px; height: 1394px;
  padding: 7px 4px 6px 8px; border-radius: 14px; background: #272727;
}
.screen {
  position: relative; display: grid; height: 1381px; overflow: hidden;
  grid-template: 330px 1fr 256px 110px / 1fr 1fr;
  color: #fff; font-family: "Noto Sans", "Open Sans", sans-serif;
  background: radial-gradient(circle at 921px 690px,
    #424b5e 0, #404a5c 140px, #3c4256 280px, #383d50 360px, #343a4a 440px, #2b3240 560px,
    #232934 680px, #1e222c 790px, #181b26 900px, #12151f 1080px, #11141e 1160px);
}

.map { position: absolute; inset: 0; width: 1842px; height: 1381px; }
.coast { fill: none; stroke: #c8d0e4; stroke-opacity: .17; stroke-width: 1.2; vector-effect: non-scaling-stroke; }
.traffic { fill: none; marker: url(#dim); }
.hubs { fill: none; marker: url(#lit); }
.pacific { fill: none; marker: url(#pt); }
.range { fill: none; stroke: #c3cad6; stroke-opacity: .5; stroke-width: 1.6; vector-effect: non-scaling-stroke; }
.faint { stroke-opacity: .36; }

.top {
  position: relative; grid-column: 1 / 3; display: flex;
  justify-content: space-between; align-items: flex-start; padding: 0 2.500px 0 26px;
}
.logo { width: 280px; height: 170px; margin-top: 20px; overflow: visible; }
.brand { font: 900 27.200px Lato, sans-serif; fill: #fff; stroke: #fff; stroke-width: .5px; }
.accent { fill: #ec9a3c; stroke: #ec9a3c; }
.user { font-size: 18px; line-height: 36px; letter-spacing: .3px; color: #dfe1e6; }

.modes {
  position: relative; grid-column: 2; display: flex; flex-direction: column;
  align-items: flex-end; gap: 69px; padding: 237px 27px 0 0;
}
.mode { display: flex; align-items: center; gap: 37px; height: 46.600px; font-size: 29.500px; line-height: 46px; white-space: nowrap; }
.mode span { padding-top: 2px; transform-origin: right; }
.solo span { transform: scaleX(.977); }
.online span { transform: scaleX(.943); }
.atc span { transform: scaleX(.968); }
.mode svg { width: 46.670px; height: 46.670px; fill: #fff; }

.menu { position: relative; grid-column: 1; padding: 0 0 0 42.500px; }
.menu a { display: flex; align-items: center; gap: 15.500px; height: 61.250px; font-size: 30px; line-height: 40px; }
.menu svg { width: 30.500px; height: 30.500px; fill: #fff; }
.menu span { transform: scaleX(.947); transform-origin: left; }

.social { position: relative; grid-area: 4 / 1; display: flex; gap: 30.800px; padding: 27.500px 0 0 43px; }
.social svg { width: 48px; height: 48px; fill: #fff; }

.status {
  position: relative; grid-area: 4 / 1 / 5 / 3; align-self: end; justify-self: center;
  font-size: 10px; line-height: 12px; letter-spacing: .16px; color: #6d717b;
}

.badge {
  position: absolute; width: 50px; height: 50px; margin: -25px 0 0 -25px; border-radius: 50%;
  background: #fb9621; color: #fff; text-align: center; text-indent: -2px;
  font: 400 48px/50px "Liberation Sans", Arial, sans-serif;
}
.n1 { left: 1923px; top: 93px; font-family: Roboto, sans-serif; text-indent: -4px; }
.n2 { left: 1716.400px; top: 651px; }
.n3 { left: 1691.500px; top: 765.600px; }
.n4 { left: 1543.800px; top: 883px; }
.n5 { left: 439px; top: 1102px; }
.n6 { left: 439px; top: 1165px; }
.n7 { left: 439px; top: 1228px; }
.n8 { left: 439px; top: 1291px; }
.n9 { left: 546.700px; top: 1382px; }
```
